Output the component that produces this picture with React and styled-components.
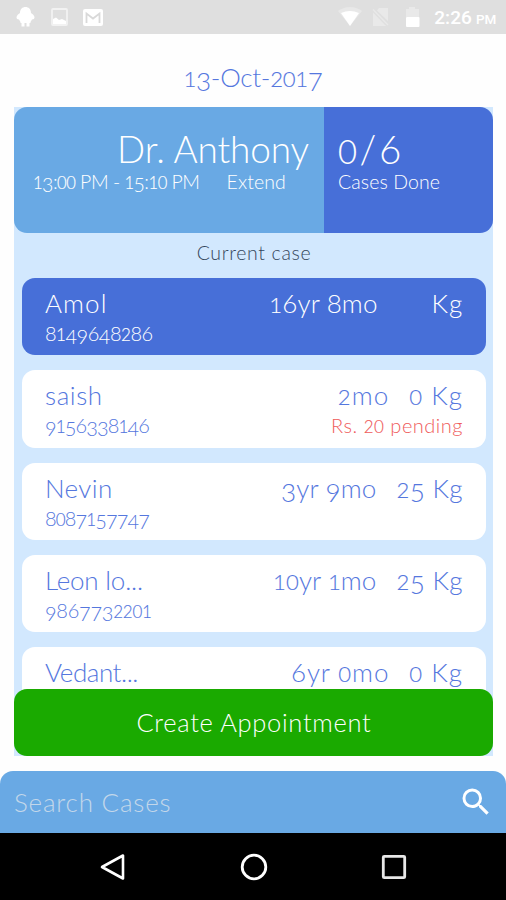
import React from "react";
import styled, { createGlobalStyle } from "styled-components";

const Global = createGlobalStyle`
  * { box-sizing: border-box; }
  body { margin: 0; background: #fff; font-family: Lato, "Open Sans", sans-serif; font-weight: 300; }
`;

const Screen = styled.div`
  width: 506px;
  height: 900px;
  display: flex;
  flex-direction: column;
  overflow: hidden;
  background: #fefefe;
`;

const StatusBar = styled.header`
  flex: none;
  height: 34px;
  background: #dfdfdf;
  display: flex;
  align-items: center;
  justify-content: space-between;
  padding: 0 10px 0 16px;
  svg { display: block; }
`;

const StatusGroup = styled.div`
  display: flex;
  align-items: center;
  gap: ${(p) => p.$gap}px;
`;

const Clock = styled.div`
  font: 500 19px/34px Roboto, sans-serif;
  color: #fff;
  margin-left: 1px;
  padding-top: 3px;
  letter-spacing: 0.1px;
  white-space: nowrap;
  small { font-size: 13.5px; letter-spacing: -0.2px; margin-left: 4px; }
`;

const Text = styled.span`
  display: block;
  white-space: pre;
  font-size: ${(p) => p.$size}px;
  line-height: ${(p) => p.$line || 20}px;
  letter-spacing: ${(p) => p.$track || 0}px;
  color: ${(p) => p.$color || "inherit"};
`;

/* Old-style numerals: 0-2 sit at x-height, 3 4 5 7 9 hang below the baseline. */
const Digit = styled.span`
  line-height: 0;
  font-size: ${(p) => ("012".includes(p.$d) ? "0.85em" : "1em")};
  -webkit-text-stroke: ${(p) => ("012".includes(p.$d) ? "0.15px" : "0")};
  vertical-align: ${(p) => ("34579".includes(p.$d) ? "-0.155em" : "baseline")};
`;

const DateRow = styled.div`
  flex: none;
  height: 73px;
  padding-top: 26px;
  display: flex;
  justify-content: center;
  color: #5577de;
`;

const Panel = styled.main`
  flex: none;
  height: 649px;
  margin: 0 13px 0 14px;
  background: #d2e8fe;
  display: flex;
  flex-direction: column;
`;

const Summary = styled.section`
  flex: none;
  height: 126px;
  display: flex;
  border-radius: 13px;
  overflow: hidden;
  color: #fff;
`;

const Doctor = styled.div`
  width: 310px;
  padding: 23px 15px 0 19px;
  background: #69a9e4;
  display: flex;
  flex-direction: column;
  align-items: flex-end;
  gap: 4px;
`;

const Hours = styled.div`
  width: 100%;
  display: flex;
  gap: 27px;
`;

const Progress = styled.div`
  flex: 1;
  padding: 23px 0 0 14px;
  background: #476fd8;
  display: flex;
  flex-direction: column;
  gap: 4px;
`;

const SectionTitle = styled.div`
  flex: none;
  height: 45px;
  padding: 10px 0 0 1px;
  display: flex;
  justify-content: center;
  color: #34465c;
`;

const CaseList = styled.div`
  flex: 1;
  min-height: 0;
  padding: 0 7px 0 8px;
  overflow: hidden;
  display: flex;
  flex-direction: column;
  gap: 15px;
`;

const Card = styled.article`
  flex: none;
  height: 77.3px;
  padding: 12px 23px 0 23px;
  border-radius: 13px;
  display: flex;
  flex-direction: column;
  gap: 7px;
  background: ${(p) => (p.$active ? "#476fd8" : "#fff")};
  color: ${(p) => (p.$active ? "#fff" : "#5577de")};
`;

const CardLine = styled.div`
  display: flex;
  justify-content: space-between;
`;

const Vitals = styled.div`
  display: flex;
  gap: ${(p) => p.$gap}px;
`;

const CreateButton = styled.button`
  flex: none;
  position: relative;
  height: 67px;
  margin-top: -13px;
  padding: 0 0 2px 1px;
  border: 0;
  border-radius: 13px;
  background: #1aaa00;
  color: #fff;
  font: inherit;
  display: flex;
  align-items: center;
  justify-content: center;
`;

const SearchBar = styled.div`
  flex: none;
  height: 62px;
  margin-top: 15px;
  padding: 0 12px 1px 14px;
  border-radius: 13px 13px 0 0;
  background: #69a9e4;
  color: #c3d7ea;
  display: flex;
  align-items: center;
  justify-content: space-between;
`;

const NavBar = styled.nav`
  flex: 1;
  background: #000;
  display: grid;
  grid-template-columns: 28px 28px 28px;
  column-gap: 112.5px;
  justify-content: center;
  align-items: center;
  padding-left: 1px;
`;

function Label({ children, ...rest }) {
  return (
    <Text {...rest}>
      {children.split(/(\d)/).map((part, i) =>
        /^\d$/.test(part) ? <Digit key={i} $d={part}>{part}</Digit> : part
      )}
    </Text>
  );
}

const cases = [
  { name: "Amol", nt: 1.1, phone: "8149648286", pt: -0.5, age: "16yr 8mo", at: 0.15, kg: "Kg", kt: 0.8, gap: 54, active: true },
  { name: "saish", nt: 0.6, phone: "9156338146", pt: -0.85, age: "2mo", at: 1.1, kg: "0 Kg", kt: 1, gap: 20, due: "Rs. 20 pending" },
  { name: "Nevin", nt: 0.4, phone: "8087157747", pt: -0.85, age: "3yr 9mo", at: 0.15, kg: "25 Kg", kt: 0.35, gap: 20 },
  { name: "Leon lo...", nt: -0.2, phone: "9867732201", pt: -0.25, age: "10yr 1mo", at: 0.1, kg: "25 Kg", kt: 0.35, gap: 20 },
  { name: "Vedant...", nt: -0.45, phone: "", age: "6yr 0mo", at: 0.9, kg: "0 Kg", kt: 1, gap: 20 },
];

export default function App() {
  return (
    <Screen>
      <Global />
      <StatusBar>
        <StatusGroup $gap={15.5}>
          <svg width="19" height="22" viewBox="0 0 19 22" fill="#fff">
            <path d="M4 7C4 3 6.500 1 9.500 1S15 3 15 7l2 1.500c1 1 1.500 2 1.500 3s-1 2-2.500 2L14.500 16v1h-1v3.500h-3V17h-2v3.500h-3V17h-1v-1L3 13.500c-1.500 0-2.500-1-2.500-2s.5-2 1.500-3z" />
          </svg>
          <svg width="17" height="18" viewBox="0 0 17 18" fill="none">
            <rect x="1" y="1" width="15" height="16" rx="1" stroke="#f2f2f2" strokeWidth="1.800" />
            <path d="M2 16v-5l3-1.500 3 2.500 3-1 4 2v3z" fill="#fff" />
          </svg>
          <svg width="20" height="17" viewBox="0 0 20 17">
            <rect width="20" height="17" rx="2" fill="#fff" />
            <path d="M3.500 14V4.500L10 9.500l6.500-5V14" fill="none" stroke="#d9d9d9" strokeWidth="1.800" />
          </svg>
        </StatusGroup>
        <StatusGroup $gap={10}>
          <svg width="24" height="20" viewBox="0 0 24 20">
            <path d="M0 4Q12-4 24 4L12 19z" fill="#e8e8e8" />
            <path d="M3 6Q12 2 21 6L12 19z" fill="#fff" />
          </svg>
          <svg width="17" height="20" viewBox="0 0 17 20">
            <path d="M7 1h9v13L5 3.500zM1 5.500 14 19H1z" fill="#e9e9e9" />
            <path d="M1 2.500 16 18" stroke="#e9e9e9" strokeWidth="1.300" />
          </svg>
          <svg width="24" height="22" viewBox="2 0 24 22">
            <path d="M9 3h3V1h6v2h4v8H9z" fill="#e9e9e9" />
            <rect x="9" y="11" width="13.500" height="10" rx="1" fill="#fff" />
          </svg>
          <Clock>2:26<small>PM</small></Clock>
        </StatusGroup>
      </StatusBar>

      <DateRow>
        <Label $size={26} $line={34} $track={-0.3}>13-Oct-2017</Label>
      </DateRow>

      <Panel>
        <Summary>
          <Doctor>
            <Label $size={37} $line={38} $track={-0.12}>Dr. Anthony</Label>
            <Hours>
              <Label $size={19.5} $track={-0.5}>13:00 PM - 15:10 PM</Label>
              <Label $size={19.5} $track={0.1}>Extend</Label>
            </Hours>
          </Doctor>
          <Progress>
            <Label $size={38.5} $line={38} $track={2.6}>0/6</Label>
            <Label $size={19.5} $track={0.1}>Cases Done</Label>
          </Progress>
        </Summary>
        <SectionTitle>
          <Label $size={19.5} $track={0.65}>Current case</Label>
        </SectionTitle>
        <CaseList>
          {cases.map((c) => (
            <Card key={c.name} $active={c.active}>
              <CardLine>
                <Label $size={26} $line={26} $track={c.nt}>{c.name}</Label>
                <Vitals $gap={c.gap}>
                  <Label $size={26} $line={26} $track={c.at}>{c.age}</Label>
                  <Label $size={26} $line={26} $track={c.kt}>{c.kg}</Label>
                </Vitals>
              </CardLine>
              <CardLine>
                <Label $size={20} $track={c.pt}>{c.phone}</Label>
                {c.due && <Label $size={20} $track={0.5} $color="#ef5b5b">{c.due}</Label>}
              </CardLine>
            </Card>
          ))}
        </CaseList>
        <CreateButton>
          <Label $size={25.5} $line={30} $track={0.68}>Create Appointment</Label>
        </CreateButton>
      </Panel>

      <SearchBar>
        <Label $size={26} $line={34} $track={0.8}>Search Cases</Label>
        <svg width="36" height="36" viewBox="0 0 24 24" fill="#fff">
          <path d="M15.500 14h-.79l-.28-.27A6.470 6.470 0 0 0 16 9.500 6.500 6.500 0 1 0 9.500 16c1.610 0 3.090-.59 4.230-1.570l.27.28v.79l5 4.990L20.490 19l-4.990-5zm-6 0C7.010 14 5 11.990 5 9.500S7.010 5 9.500 5 14 7.010 14 9.500 11.990 14 9.500 14z" />
        </svg>
      </SearchBar>

      <NavBar>
        <svg width="28" height="28" viewBox="0 0 28 28" fill="none" stroke="#fff" strokeWidth="2.600" strokeLinejoin="round">
          <path d="M3 14 24 2.500v23z" />
        </svg>
        <svg width="28" height="28" viewBox="0 0 28 28" fill="none" stroke="#fff" strokeWidth="2.800">
          <circle cx="14" cy="14" r="11.800" />
        </svg>
        <svg width="28" height="28" viewBox="0 0 28 28" fill="none" stroke="#e8e8e8" strokeWidth="2.800">
          <rect x="3.300" y="3.300" width="21.400" height="21.400" rx="1" />
        </svg>
      </NavBar>
    </Screen>
  );
}
